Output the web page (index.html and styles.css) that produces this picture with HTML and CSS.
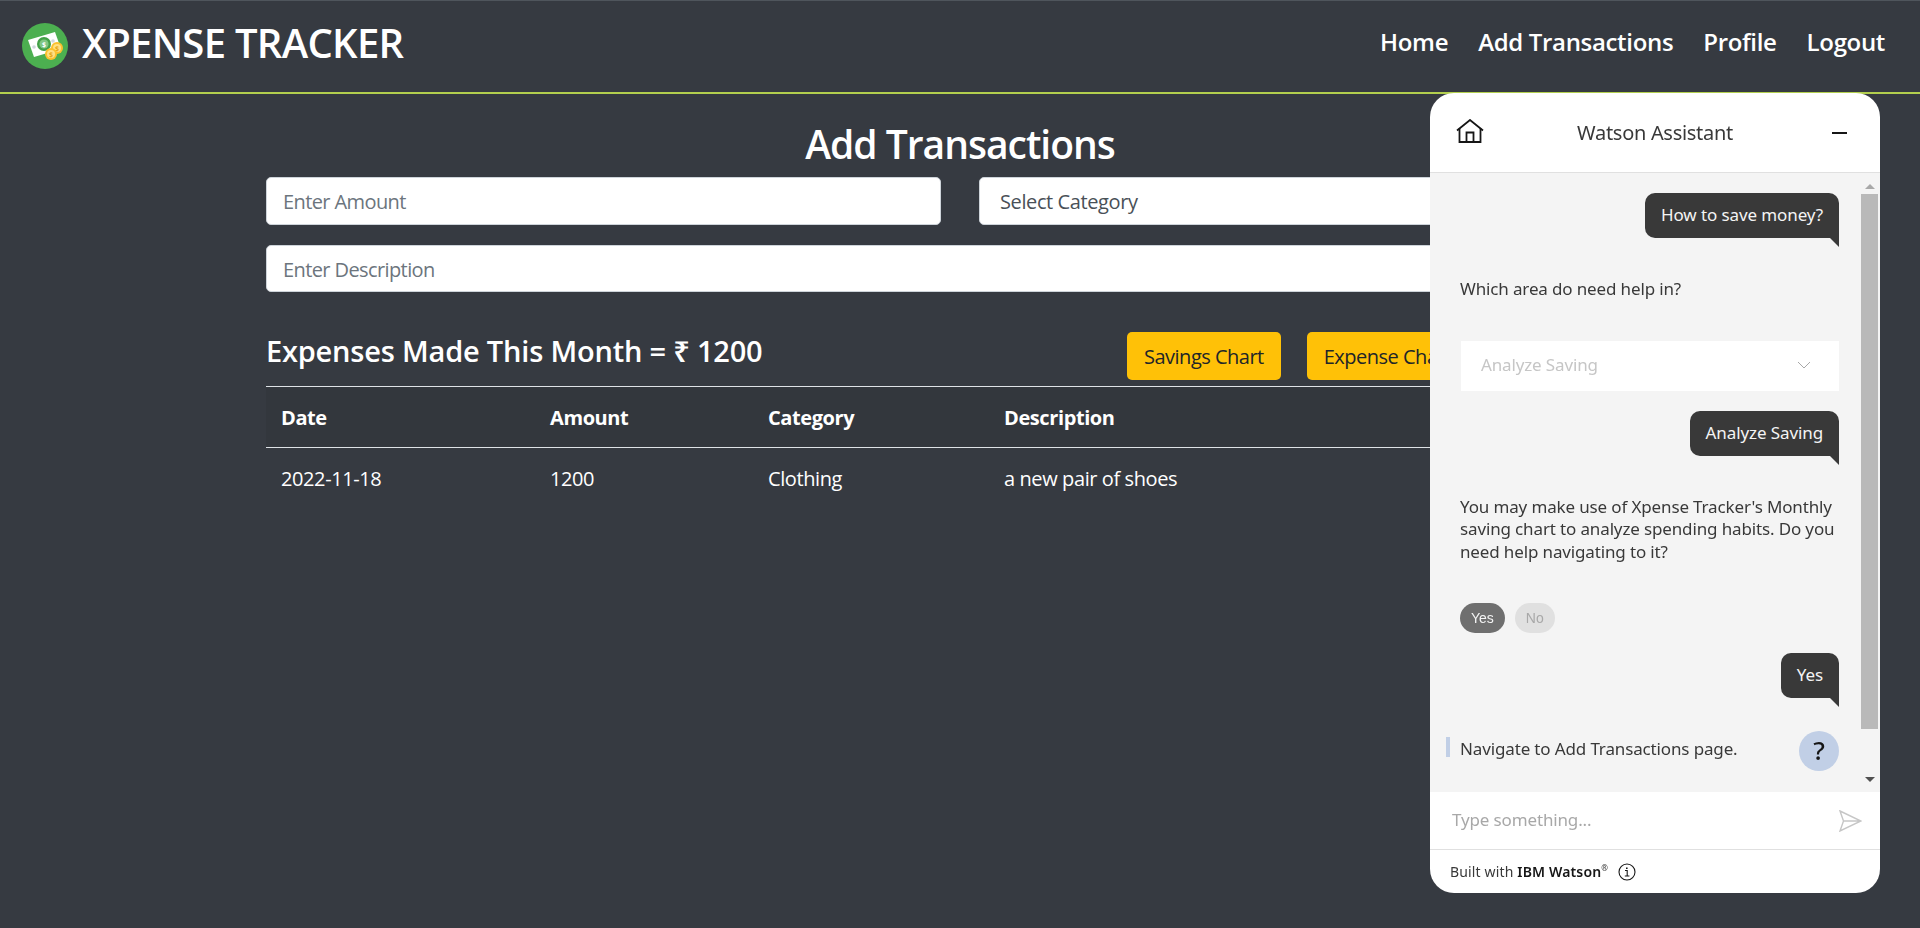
FILE: index.html
```html
<!DOCTYPE html>
<html>
	<head>
		<title>Xpense Tracker</title>
		<link rel="stylesheet" href="styles.css">
	</head>
	<body>
		<nav class="navbar">
			<a class="brand" href="#">
				<svg class="logo" viewBox="0 0 46 46">
					<circle cx="23" cy="23" r="23" fill="#4caf50"/>
					<polygon points="6,17 33,9 39,26 12,34" fill="#fff"/>
					<circle cx="22" cy="21" r="7" fill="#43a047"/>
					<circle cx="22" cy="21" r="4.6" fill="#81c784"/>
					<text x="22" y="24" class="logo-sign logo-sign-bill">$</text>
					<circle cx="12" cy="24" r="1.8" fill="#cfd8dc"/>
					<circle cx="31" cy="18" r="1.8" fill="#cfd8dc"/>
					<circle cx="35" cy="25" r="6" fill="#fbc02d"/>
					<circle cx="35" cy="25" r="4" fill="#ffe082"/>
					<text x="35" y="27.5" class="logo-sign">$</text>
					<circle cx="29" cy="31" r="6" fill="#fbc02d"/>
					<circle cx="29" cy="31" r="4" fill="#ffe082"/>
					<text x="29" y="33.5" class="logo-sign">$</text>
				</svg>
				<span class="brand-name">XPENSE TRACKER</span>
			</a>
			<ul class="nav-links">
				<li><a href="#">Home</a></li>
				<li><a href="#">Add Transactions</a></li>
				<li><a href="#">Profile</a></li>
				<li><a href="#">Logout</a></li>
			</ul>
		</nav>

		<main class="content">
			<h2 class="page-title">Add Transactions</h2>
			<form class="tx-form">
				<input class="field" type="text" placeholder="Enter Amount">
				<div class="field field-select">Select Category</div>
				<input class="field field-wide" type="text" placeholder="Enter Description">
			</form>
			<div class="summary">
				<h3 class="summary-title">Expenses Made This Month = ₹ 1200</h3>
				<div class="summary-actions">
					<button class="btn-chart" type="button">Savings Chart</button>
					<button class="btn-chart" type="button">Expense Chart</button>
				</div>
			</div>
			<table class="tx-table">
				<thead>
					<tr>
						<th class="col-date">Date</th>
						<th class="col-amount">Amount</th>
						<th class="col-category">Category</th>
						<th>Description</th>
					</tr>
				</thead>
				<tbody>
					<tr>
						<td>2022-11-18</td>
						<td>1200</td>
						<td>Clothing</td>
						<td>a new pair of shoes</td>
					</tr>
				</tbody>
			</table>
		</main>

		<aside class="chat">
			<header class="chat-head">
				<svg class="chat-home" viewBox="0 0 28 24" fill="none" stroke="#161616" stroke-width="1.8">
					<path d="M1 11.5 14 1l13 10.5"/>
					<path d="M3.5 9.5V23h21V9.5"/>
					<path d="M10.5 23V13.5h7V23"/>
				</svg>
				<span class="chat-title">Watson Assistant</span>
				<span class="chat-min"></span>
			</header>
			<div class="chat-body">
				<div class="chat-log">
					<div class="bubble bubble-first">How to save money?</div>
					<p class="bot-text bot-which">Which area do need help in?</p>
					<div class="chat-dropdown">
						<span>Analyze Saving</span>
						<svg class="chevron" viewBox="0 0 14 8" fill="none" stroke="#a8a8a8" stroke-width="1"><path d="M1 1l6 6 6-6"/></svg>
					</div>
					<div class="bubble">Analyze Saving</div>
					<p class="bot-text bot-long">You may make use of Xpense Tracker's Monthly saving chart to analyze spending habits. Do you need help navigating to it?</p>
					<div class="pills">
						<span class="pill pill-on">Yes</span>
						<span class="pill pill-off">No</span>
					</div>
					<div class="bubble">Yes</div>
					<div class="nav-hint">
						<p class="bot-text">Navigate to Add Transactions page.</p>
						<span class="hint-btn">?</span>
					</div>
				</div>
				<div class="scroll">
					<span class="arrow arrow-up"></span>
					<span class="thumb"></span>
					<span class="arrow arrow-down"></span>
				</div>
			</div>
			<div class="chat-input">
				<span class="chat-placeholder">Type something...</span>
				<svg class="send" viewBox="0 0 23 22" fill="none" stroke="#c6c6c6" stroke-width="1.4"><path d="M1 1l21 10L1 21l3.5-10zM4.5 11H22"/></svg>
			</div>
			<footer class="chat-foot">
				<span>Built with <b>IBM Watson</b><sup>®</sup></span>
				<svg class="info" viewBox="0 0 18 18" fill="none" stroke="#161616" stroke-width="1.1">
					<circle cx="9" cy="9" r="8"/>
					<path d="M7 7.5h2.2v5.5M6.8 13h4.6"/>
					<path d="M8.8 4.4v1.6" stroke-width="1.6"/>
				</svg>
			</footer>
		</aside>
	</body>
</html>
```

FILE: styles.css
```css
* {
	box-sizing: border-box;
}

html, body {
	height: 100%;
}

body {
	margin: 0;
	overflow: hidden;
	background: #363a41;
	color: #fff;
	font-family: "Open Sans", "Noto Sans", sans-serif;
}

a {
	color: inherit;
	text-decoration: none;
}

/* navbar */
.navbar {
	display: flex;
	align-items: center;
	justify-content: space-between;
	height: 94px;
	padding: 0 35px 2px 22px;
	border-top: 1px solid #4f555c;
	border-bottom: 2px solid #b3cf4e;
}

.brand {
	display: flex;
	align-items: center;
	gap: 14px;
}

.logo {
	width: 46px;
	height: 46px;
}

.logo-sign {
	font-size: 7px;
	font-weight: 700;
	text-anchor: middle;
	fill: #e6a817;
}

.logo-sign-bill {
	fill: #fff;
}

.brand-name {
	padding-bottom: 6px;
	font-size: 40px;
	font-weight: 600;
	letter-spacing: -0.7px;
}

.nav-links {
	display: flex;
	gap: 30px;
	margin: 0;
	padding: 0 0 8px;
	list-style: none;
	font-size: 24px;
	font-weight: 600;
	letter-spacing: -0.33px;
}

/* main column */
.content {
	width: 1388px;
	margin: 0 auto;
	padding-top: 26px;
}

.page-title {
	margin: 0 0 9px;
	font-size: 39px;
	font-weight: 600;
	line-height: 48px;
	text-align: center;
	letter-spacing: -1px;
}

.tx-form {
	display: grid;
	grid-template-columns: 675px 675px;
	justify-content: space-between;
	row-gap: 20px;
}

.field {
	height: 48px;
	padding: 0 16px;
	border: 1px solid #ced4da;
	border-radius: 5px;
	background: #fff;
	font: 20px "Open Sans", sans-serif;
	letter-spacing: -0.6px;
	color: #495057;
}

.field::placeholder {
	color: #6c757d;
}

.field-select {
	display: flex;
	align-items: center;
	padding-left: 20px;
	letter-spacing: -0.4px;
}

.field-wide {
	grid-column: 1 / 3;
	height: 47px;
	padding-top: 2px;
}

.summary {
	display: flex;
	align-items: flex-start;
	height: 54px;
	margin-top: 40px;
}

.summary-title {
	flex: none;
	width: 861px;
	margin: 0;
	font-size: 29px;
	font-weight: 600;
	line-height: 37px;
	letter-spacing: -0.2px;
}

.summary-actions {
	display: flex;
	flex: none;
	gap: 26px;
}

.btn-chart {
	height: 48px;
	padding: 0 17px;
	border: 0;
	border-radius: 5px;
	background: #ffc107;
	color: #212529;
	font: 20px "Open Sans", sans-serif;
	letter-spacing: -0.5px;
	white-space: nowrap;
}

.tx-table {
	width: 100%;
	border-collapse: collapse;
	font-size: 20px;
	letter-spacing: -0.4px;
}

.tx-table th, .tx-table td {
	padding: 17px 15px 15px;
	line-height: 28px;
	text-align: left;
}

.tx-table th {
	border-top: 1px solid #dee2e6;
	border-bottom: 1px solid #dee2e6;
	background: #33373d;
	font-weight: 700;
}

.col-date {
	width: 269px;
}

.col-amount {
	width: 218px;
}

.col-category {
	width: 236px;
}

/* watson widget, floats above the page */
.chat {
	position: fixed;
	top: 93px;
	right: 40px;
	display: flex;
	flex-direction: column;
	width: 450px;
	height: 800px;
	overflow: hidden;
	border-radius: 24px;
	background: #fff;
	color: #393939;
	font-family: "Noto Sans", sans-serif;
}

.chat-head {
	display: flex;
	align-items: center;
	justify-content: space-between;
	flex: none;
	height: 80px;
	padding: 0 33px 0 26px;
	border-bottom: 1px solid #e0e0e0;
}

.chat-home {
	width: 28px;
	height: 24px;
	margin-top: -4px;
}

.chat-title {
	margin-right: 6px;
	font-size: 20px;
	letter-spacing: -0.3px;
}

.chat-min {
	width: 15px;
	height: 2px;
	background: #161616;
}

.chat-body {
	display: flex;
	flex: 1;
	min-height: 0;
	background: #f4f4f4;
}

.chat-log {
	flex: 1;
	padding: 20px 22px 0 30px;
}

.bot-text {
	margin: 0;
	font-size: 17px;
	line-height: 22.5px;
	letter-spacing: -0.14px;
}

.bubble {
	position: relative;
	width: fit-content;
	height: 45px;
	margin-left: auto;
	padding: 0 16px;
	border-radius: 10px 10px 0 10px;
	background: #393939;
	color: #f4f4f4;
	font-size: 17px;
	line-height: 43px;
	letter-spacing: -0.1px;
	white-space: nowrap;
}

.bubble::after {
	content: "";
	position: absolute;
	top: 100%;
	right: 0;
	border-top: 9px solid #393939;
	border-left: 9px solid transparent;
}

.bot-which {
	margin-top: 40px;
}

.chat-dropdown {
	display: flex;
	align-items: center;
	justify-content: space-between;
	height: 50px;
	margin: 40px 0 20px 1px;
	padding: 0 28px 2px 20px;
	background: #fff;
	color: #c6c6c6;
	font-size: 17px;
	letter-spacing: -0.14px;
}

.chevron {
	width: 14px;
	height: 8px;
}

.bot-long {
	margin-top: 40px;
}

.pills {
	display: flex;
	gap: 10px;
	margin: 40px 0 20px;
}

.pill {
	height: 30px;
	padding: 0 11px;
	border-radius: 15px;
	font-family: "Liberation Sans", sans-serif;
	font-size: 14px;
	line-height: 30px;
}

.pill-on {
	background: #6f6f6f;
	color: #f4f4f4;
}

.pill-off {
	background: #e0e0e0;
	color: #a8a8a8;
}

.nav-hint {
	position: relative;
	display: flex;
	align-items: center;
	justify-content: space-between;
	height: 40px;
	margin-top: 33px;
}

.nav-hint::before {
	content: "";
	position: absolute;
	left: -14px;
	top: 6px;
	width: 4px;
	height: 20px;
	background: #c1cfe6;
}

.nav-hint .bot-text {
	margin-top: -4px;
}

.hint-btn {
	width: 40px;
	height: 40px;
	border-radius: 50%;
	background: #c1cfe6;
	color: #161616;
	font-size: 26px;
	font-weight: 500;
	line-height: 38px;
	text-align: center;
}

.scroll {
	display: flex;
	flex-direction: column;
	align-items: center;
	flex: none;
	width: 19px;
	padding-right: 2px;
}

.arrow {
	flex: none;
	border-left: 5px solid transparent;
	border-right: 5px solid transparent;
}

.arrow-up {
	margin-top: 11px;
	border-bottom: 5px solid #a8a8a8;
}

.arrow-down {
	margin-top: 48px;
	border-top: 5px solid #505050;
}

.thumb {
	flex: none;
	width: 17px;
	height: 535px;
	margin-top: 5px;
	background: #b9b9b9;
}

.chat-input {
	display: flex;
	align-items: center;
	justify-content: space-between;
	flex: none;
	height: 58px;
	padding: 0 18px 0 22px;
	border-bottom: 1px solid #e0e0e0;
}

.chat-placeholder {
	margin-top: -2px;
	color: #a8a8a8;
	font-size: 17px;
	letter-spacing: -0.14px;
}

.send {
	width: 23px;
	height: 22px;
}

.chat-foot {
	display: flex;
	align-items: center;
	gap: 10px;
	flex: none;
	height: 43px;
	padding-left: 20px;
	font-size: 14px;
	letter-spacing: 0.15px;
}

.chat-foot b {
	color: #161616;
	font-weight: 600;
}

.chat-foot sup {
	font-size: 8px;
	line-height: 0;
}

.info {
	width: 18px;
	height: 18px;
}
```
